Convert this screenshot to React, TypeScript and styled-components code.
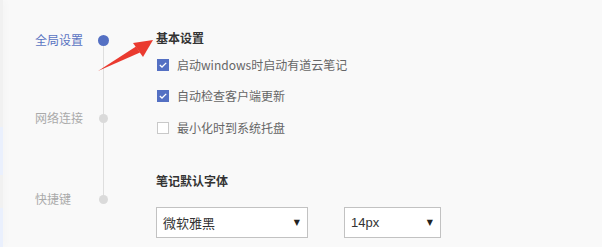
import React from "react";
import styled, { createGlobalStyle } from "styled-components";

const Global = createGlobalStyle`
  html, body { margin: 0; padding: 0; }
  body {
    background: #f9f9f9;
    font-family: "Microsoft YaHei", "Noto Sans CJK SC", "Noto Sans", sans-serif;
    overflow: hidden;
  }
`;

const Page = styled.div`
  position: relative;
  display: flex;
  width: 602px;
  height: 247px;
  overflow: hidden;
  background: #f9f9f9;
`;

const Edge = styled.div`
  width: 3px;
  display: flex;
  flex-direction: column;
  box-shadow: 2px 0 6px rgba(0, 0, 0, 0.035);
`;

const EdgeSeg = styled.div<{ $h: number; $tint?: boolean }>`
  height: ${(p) => p.$h}px;
  background: ${(p) => (p.$tint ? "#eaf0fd" : "#f1f1f1")};
`;

const Nav = styled.nav`
  position: relative;
  width: 153px;
  display: flex;
  flex-direction: column;
  padding-left: 32px;
  box-sizing: border-box;
`;

const Rail = styled.div`
  position: absolute;
  left: 100px;
  top: 40px;
  width: 1px;
  height: 160px;
  background: #dedede;
`;

const NavItem = styled.div<{ $offset: number }>`
  position: relative;
  display: flex;
  align-items: center;
  height: 14px;
  margin-top: ${(p) => p.$offset}px;
`;

const NavLabel = styled.span<{ $active?: boolean }>`
  width: 63px;
  font-size: 12px;
  line-height: 14px;
  color: ${(p) => (p.$active ? "#5a74c2" : "#aaaaaa")};
  white-space: nowrap;
`;

const DotCol = styled.div`
  width: 11px;
  display: flex;
  justify-content: center;
`;

const Dot = styled.span<{ $active?: boolean }>`
  display: block;
  width: ${(p) => (p.$active ? 11 : 9)}px;
  height: ${(p) => (p.$active ? 11 : 9)}px;
  border-radius: 50%;
  background: ${(p) => (p.$active ? "#5470c3" : "#dadada")};
`;

const Content = styled.main`
  flex: 1;
  display: flex;
  flex-direction: column;
  padding-top: 31px;
`;

const Title = styled.h3<{ $gap: number }>`
  margin: 0;
  margin-top: ${(p) => p.$gap}px;
  font-size: 12px;
  line-height: 14px;
  font-weight: bold;
  color: #333333;
`;

const CheckList = styled.div`
  display: flex;
  flex-direction: column;
  margin-top: 4px;
`;

const Row = styled.label`
  display: flex;
  align-items: center;
  height: 31.5px;
  padding-left: 1px;
  gap: 8px;
`;

const Box = styled.span<{ $checked?: boolean }>`
  width: 12px;
  height: 12px;
  box-sizing: border-box;
  display: flex;
  align-items: center;
  justify-content: center;
  background: ${(p) => (p.$checked ? "#5470c3" : "#ffffff")};
  border: 1px solid ${(p) => (p.$checked ? "#5470c3" : "#c9c9c9")};
`;

const RowText = styled.span`
  font-size: 12px;
  line-height: 14px;
  color: #666666;
  white-space: nowrap;
`;

const SelectRow = styled.div`
  display: flex;
  gap: 36px;
  margin-top: 19px;
`;

const Select = styled.div<{ $w: number; $latin?: boolean }>`
  width: ${(p) => p.$w}px;
  height: 31px;
  box-sizing: border-box;
  border: 1px solid #c2c2c2;
  background: #ffffff;
  display: flex;
  align-items: center;
  justify-content: space-between;
  padding: 0 7px 0 6px;
  font-family: ${(p) =>
    p.$latin
      ? '"Liberation Sans", "Noto Sans CJK SC", sans-serif'
      : '"Microsoft YaHei", "Noto Sans CJK SC", sans-serif'};
  font-size: 13px;
  color: #333333;
`;

const Caret = styled.span`
  font-family: "DejaVu Sans", sans-serif;
  font-size: 8px;
  color: #222;
`;

const Annotation = styled.svg`
  position: absolute;
  left: 0;
  top: 0;
  pointer-events: none;
`;

const Check = () => (
  <svg width="8" height="6" viewBox="0 0 8 6">
    <path d="M0.8 3 L3 5 L7.2 0.9" fill="none" stroke="#fff" strokeWidth="1.3" />
  </svg>
);

export default function App() {
  const items = [
    { t: "启动windows时启动有道云笔记", c: true },
    { t: "自动检查客户端更新", c: true },
    { t: "最小化时到系统托盘", c: false },
  ];
  return (
    <Page>
      <Global />
      <Edge>
        <EdgeSeg $h={127} />
        <EdgeSeg $h={48} $tint />
        <EdgeSeg $h={33} />
        <EdgeSeg $h={39} $tint />
      </Edge>
      <Nav>
        <Rail />
        <NavItem $offset={33}>
          <NavLabel $active>全局设置</NavLabel>
          <DotCol>
            <Dot $active />
          </DotCol>
        </NavItem>
        <NavItem $offset={64}>
          <NavLabel>网络连接</NavLabel>
          <DotCol>
            <Dot />
          </DotCol>
        </NavItem>
        <NavItem $offset={67}>
          <NavLabel>快捷键</NavLabel>
          <DotCol>
            <Dot />
          </DotCol>
        </NavItem>
      </Nav>
      <Content>
        <Title $gap={0}>基本设置</Title>
        <CheckList>
          {items.map((it) => (
            <Row key={it.t}>
              <Box $checked={it.c}>{it.c && <Check />}</Box>
              <RowText>{it.t}</RowText>
            </Row>
          ))}
        </CheckList>
        <Title $gap={30}>笔记默认字体</Title>
        <SelectRow>
          <Select $w={152}>
            <span>微软雅黑</span>
            <Caret>▼</Caret>
          </Select>
          <Select $w={97} $latin>
            <span>14px</span>
            <Caret>▼</Caret>
          </Select>
        </SelectRow>
      </Content>
      <Annotation width="602" height="247" viewBox="0 0 602 247">
        <polygon points="98,71 136,46.5 140,52.5" fill="#ea3a2f" />
        <polygon points="133,43 153,40 143,57" fill="#ea3a2f" />
      </Annotation>
    </Page>
  );
}
